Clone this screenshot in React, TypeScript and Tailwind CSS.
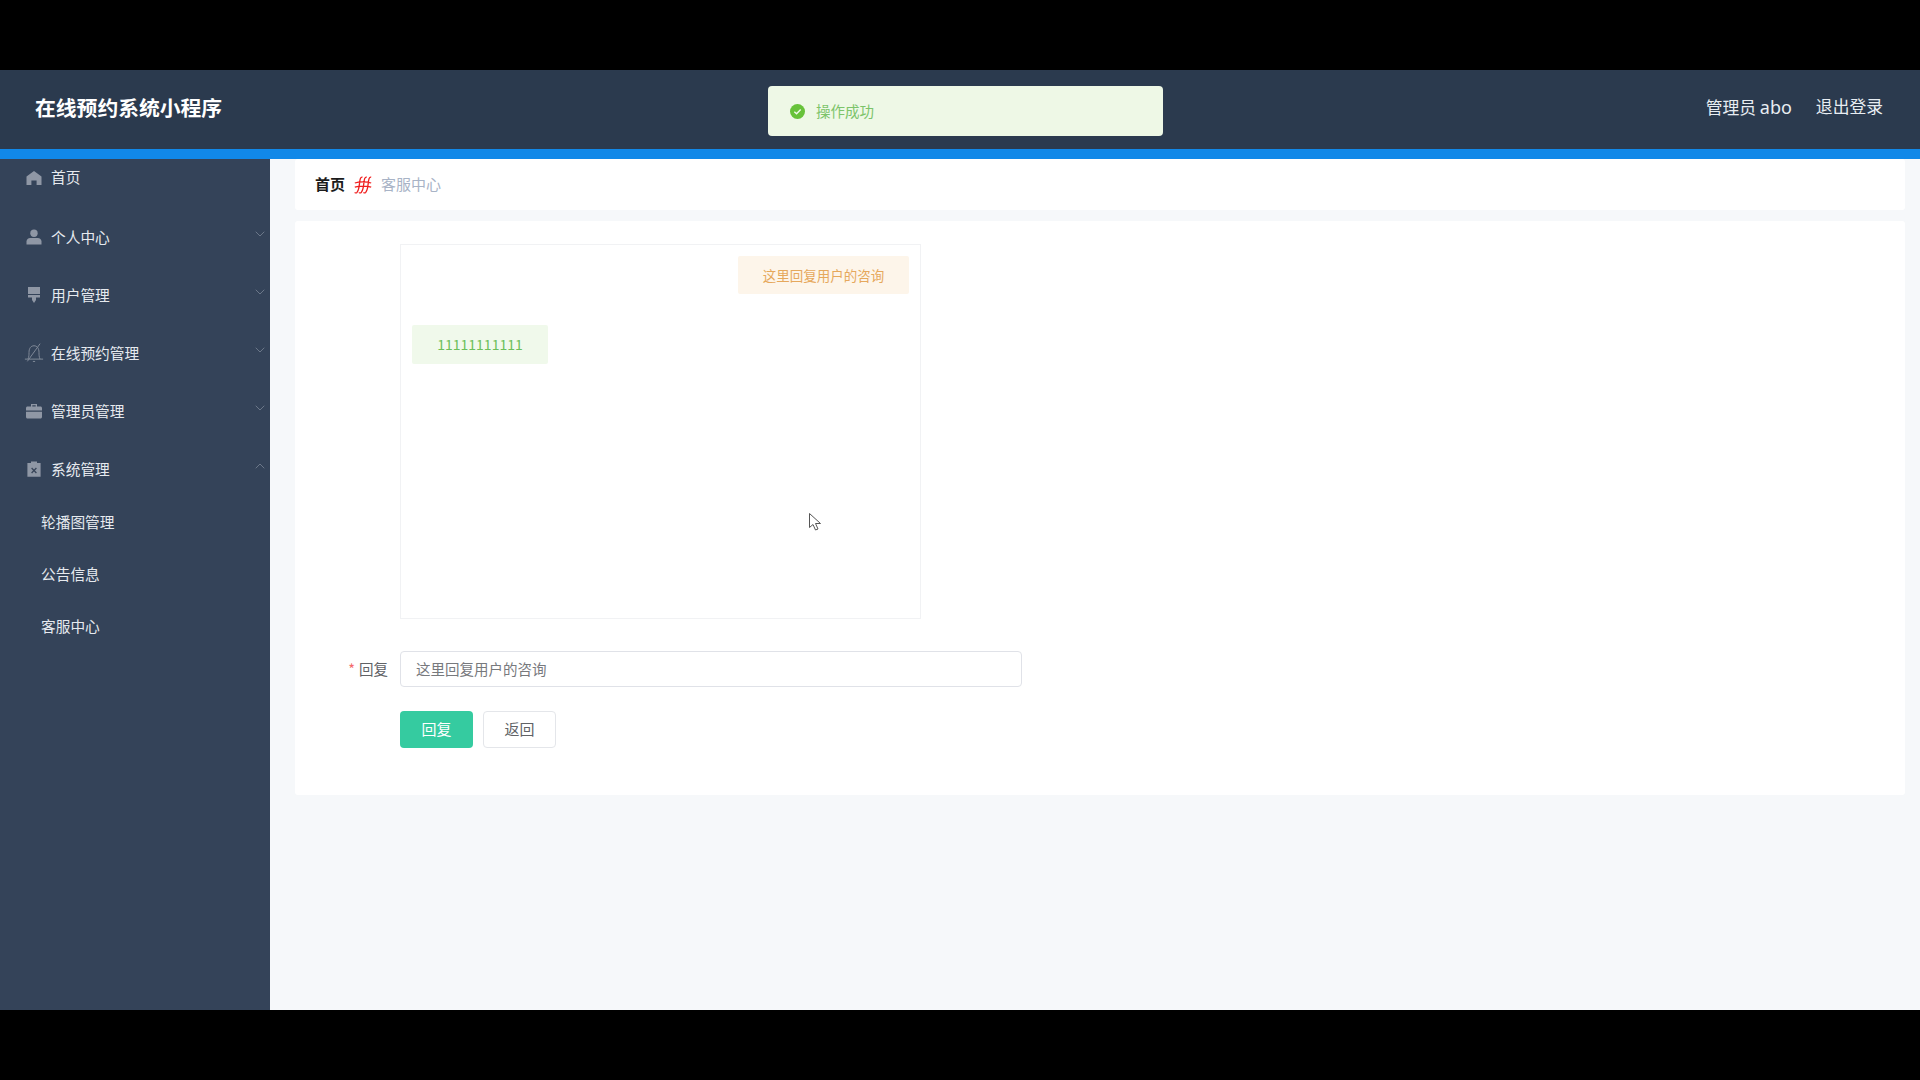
import { ChevronDown, ChevronUp } from "lucide-react"
import type { ReactNode } from "react"

const HomeIcon = () => (
  <svg viewBox="0 0 16 16" className="w-[16px] h-[16px] mt-[2px]" fill="#8f97a5">
    <path d="M8 1 15.5 6.6V15H10.6V10.6H5.4V15H.5V6.6Z" />
  </svg>
)

const UserIcon = () => (
  <svg viewBox="0 0 16 16" className="w-[16px] h-[16px]" fill="#8f97a5">
    <circle cx="8" cy="4.2" r="3.7" />
    <path d="M.5 15.5V12.4C.5 10.3 2.2 9 4.2 9h7.6c2 0 3.7 1.3 3.7 3.4v3.1Z" />
  </svg>
)

const BrushIcon = () => (
  <svg viewBox="0 0 16 16" className="w-[16px] h-[16px]" fill="#8f97a5">
    <path d="M2 0H14V7H2ZM2 8H14V10.5H10V13L8 16 6 13V10.5H2Z" />
  </svg>
)

const BellOffIcon = () => (
  <svg viewBox="0 0 18 18" className="w-[20px] h-[20px] shrink-0" fill="none" stroke="#7f8897" strokeWidth="0.9">
    <path d="M.8 14.5H17.2M3.6 14.5C4.5 12.5 4.5 10.5 4.5 8.5 4.5 5 6 2.5 9 2.5s4.5 2.5 4.5 6c0 2 0 4 .9 6M14.5.6 3 16.5M8 16.6h2" />
  </svg>
)

const CaseIcon = () => (
  <svg viewBox="0 0 16 16" className="w-[16px] h-[16px]" fill="#8f97a5">
    <path d="M5 1H11V3.5H14.5C15.3 3.5 16 4.2 16 5V7.6H0V5C0 4.2.7 3.5 1.5 3.5H5ZM6.3 2.2V3.5H9.7V2.2ZM0 8.8H16V14C16 14.8 15.3 15.5 14.5 15.5H1.5C.7 15.5 0 14.8 0 14Z" />
  </svg>
)

const ReleaseIcon = () => (
  <svg viewBox="0 0 16 16" className="w-[16px] h-[16px]">
    <path fill="#8f97a5" d="M5 .5H11V2H14.6V15.8H1.4V2H5Z" />
    <path stroke="#39465a" strokeWidth="1.3" d="M5.6 7 10.4 12M10.4 7 5.6 12" />
  </svg>
)

// red iconfont glyph between the breadcrumb items
const Separator = () => (
  <svg viewBox="0 0 18 18" className="w-[18px] h-[18px] mx-[9px]" fill="none" stroke="#f01e1e" strokeWidth="1.3">
    <path d="M8.5 1.2C6.4.8 6 3 5.6 6.5 5.2 10.5 5 14 3 16.4 2 17.2 1 17 .8 16.4M12.8 1.2C10.7.8 10.3 3 9.9 6.5 9.5 10.5 9.3 14 7.3 16.4 6.3 17.2 5.3 17 5.1 16.4M17.2 1.2C15.1.8 14.7 3 14.3 6.5 13.9 10.5 13.7 14 11.7 16.4 10.7 17.2 9.7 17 9.5 16.4M.8 7C5 5.6 13 5.6 17.2 7M.8 11.2C5 9.8 13 9.8 17.2 11.2" />
  </svg>
)

interface MenuItem {
  label: string
  icon: ReactNode
  arrow?: "down" | "up"
}

const menu: MenuItem[] = [
  { label: "个人中心", icon: <UserIcon />, arrow: "down" },
  { label: "用户管理", icon: <BrushIcon />, arrow: "down" },
  { label: "在线预约管理", icon: <BellOffIcon />, arrow: "down" },
  { label: "管理员管理", icon: <CaseIcon />, arrow: "down" },
  { label: "系统管理", icon: <ReleaseIcon />, arrow: "up" },
]

const subMenu = ["轮播图管理", "公告信息", "客服中心"]

export default function App() {
  return (
    <div
      className="relative flex flex-col h-screen overflow-hidden bg-black"
      style={{ fontFamily: '"Noto Sans CJK SC", "Noto Sans", sans-serif' }}
    >
      <div className="h-[70px] shrink-0 bg-black" />

      <header className="h-[79px] shrink-0 bg-[#2b3a4e] flex items-center justify-between pl-[35px] pr-[37px]">
        <h1 className="text-[20.8px] font-bold text-white -mt-[4px]">在线预约系统小程序</h1>
        <div className="flex items-center gap-[24px] text-[16.8px] text-[#e8edf2] -mt-[5px]">
          <span>
            管理员 <span className="text-[18px]" style={{ fontFamily: '"Noto Sans", sans-serif' }}>abo</span>
          </span>
          <span>退出登录</span>
        </div>
      </header>
      <div className="h-[10px] shrink-0 bg-[#1188e8]" />

      <div className="flex h-[851px] shrink-0">
        <aside className="w-[270px] shrink-0 bg-[#344359] text-[14.7px] text-[#e6eaef]">
          <div className="flex items-center gap-[9px] h-[36px] pl-[26px]">
            <HomeIcon />
            <span>首页</span>
          </div>
          <div className="flex flex-col">
            {menu.map((item) => (
              <div key={item.label} className="flex items-center gap-[9px] h-[58px] pl-[26px] pr-[2px] first:mt-[13px]">
                <span className="w-[16px] flex justify-center">{item.icon}</span>
                <span className="flex-1">{item.label}</span>
                {item.arrow === "up" ? (
                  <ChevronUp className="w-[16px] h-[16px] -mt-[6px] text-[#7a8596]" strokeWidth={1.2} />
                ) : (
                  <ChevronDown className="w-[16px] h-[16px] -mt-[6px] text-[#7a8596]" strokeWidth={1.2} />
                )}
              </div>
            ))}
          </div>
          <div className="flex flex-col -mt-[2px]">
            {subMenu.map((label) => (
              <div key={label} className="flex items-center h-[52px] pl-[41px]">
                {label}
              </div>
            ))}
          </div>
        </aside>

        <main className="flex-1 bg-[#f6f8fa] pl-[25px] pr-[15px]">
          <div className="h-[51px] bg-white rounded-[3px] flex items-center pl-[20px] text-[15px]">
            <span className="font-bold text-[#1c1c1c]">首页</span>
            <Separator />
            <span className="text-[#a8b3c6]">客服中心</span>
          </div>

          <div className="mt-[11px] h-[574px] bg-white rounded-[3px] pt-[23px] pl-[105px]">
            <div className="w-[521px] h-[375px] border border-[#f1f2f4] p-[11px] flex flex-col">
              <div className="flex justify-end">
                <div className="w-[171px] h-[38px] flex items-center justify-center bg-[#fdf5ea] rounded-[2px] text-[13.5px] text-[#e6a85c]">
                  这里回复用户的咨询
                </div>
              </div>
              <div className="mt-[31px] w-[136px] h-[39px] flex items-center justify-center bg-[#f0f9eb] rounded-[2px] text-[14px] text-[#6cbf5a]">
                11111111111
              </div>
            </div>

            <div className="relative mt-[32px] w-[622px]">
              <span className="absolute right-full top-0 h-[36px] mr-[12px] flex items-center whitespace-nowrap text-[14.5px] text-[#606266]">
                <span className="text-[#f56c6c] mr-[4px]">*</span>回复
              </span>
              <div className="h-[36px] border border-[#e0e2e8] rounded-[4px] flex items-center pl-[15px] text-[14.5px] text-[#77797d]">
                这里回复用户的咨询
              </div>
            </div>

            <div className="mt-[24px] flex gap-[10px]">
              <button className="w-[73px] h-[37px] rounded-[4px] bg-[#35cba0] text-white text-[15px]">回复</button>
              <button className="w-[73px] h-[37px] rounded-[4px] border border-[#e4e6ea] bg-white text-[#606266] text-[15px]">返回</button>
            </div>
          </div>
        </main>
      </div>

      <div className="flex-1 bg-black" />

      <div className="absolute left-[768px] top-[86px] w-[395px] h-[50px] flex items-center pl-[22px] gap-[11px] rounded-[4px] bg-[#eef8e6] text-[14.5px] text-[#7cc46a]">
        <svg viewBox="0 0 16 16" className="w-[15px] h-[15px]">
          <circle cx="8" cy="8" r="8" fill="#67c23a" />
          <path d="M4.6 8.2 7 10.4 11.4 5.9" fill="none" stroke="#f0f9eb" strokeWidth="1.5" />
        </svg>
        操作成功
      </div>

      <svg viewBox="0 0 14 20" className="absolute left-[808px] top-[512px] w-[14px] h-[20px]" fill="#fff" stroke="#555" strokeWidth="1">
        <path d="M1.5 1.5V15.5L5 12.5 7.5 18 10 17 7.5 11.5H12.5Z" />
      </svg>
    </div>
  )
}
